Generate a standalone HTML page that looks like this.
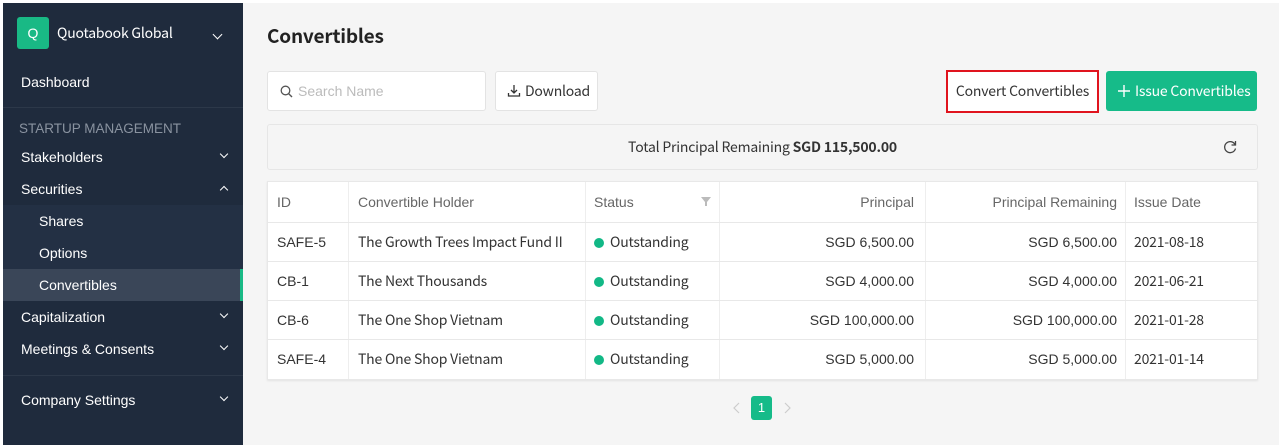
<!DOCTYPE html>
<html><head><meta charset="utf-8"><style>
*{box-sizing:border-box;margin:0;padding:0}
body{width:1282px;height:448px;background:#fff;font-family:"Liberation Sans",sans-serif;position:relative;overflow:hidden}
.sb{position:absolute;left:3px;top:3px;width:240px;height:442px;background:#1f2b3d;color:#fff}
.main{position:absolute;left:243px;top:3px;width:1036px;height:442px;background:#f5f5f5}
.a{position:absolute}
.n{font-family:"Noto Sans CJK KR","Liberation Sans",sans-serif;letter-spacing:-0.2px}
.ni{position:absolute;left:18px;font-size:14px;color:#fff}
.chev{position:absolute;right:16px;width:6px;height:6px;border-right:1.5px solid #fff;border-bottom:1.5px solid #fff;transform:rotate(45deg)}
.btn{position:absolute;background:#fff;border:1px solid #e3e3e3;border-radius:3px;font-size:14px;color:#333}
.tbl{position:absolute;left:24px;top:178px;width:991px;background:#fff;border:1px solid #e8e8e8;box-shadow:0 1px 2px rgba(0,0,0,.08)}
.row{position:relative;height:39px;border-bottom:1px solid #e8e8e8;font-size:14px;color:#333}
.row:last-child{border-bottom:none}
.c{position:absolute;top:0;height:100%;line-height:38px;border-right:1px solid #eee;white-space:nowrap}
.hd{height:41px;color:#666}
.hd .c{line-height:41px}
.dot{display:inline-block;width:10px;height:10px;border-radius:50%;background:#12b886;margin-right:6px;vertical-align:-1px}
</style></head><body>
<div class="sb">
 <div class="a" style="left:14px;top:14px;width:32px;height:32px;background:#19b985;border-radius:3px;color:#fff;text-align:center;line-height:32px;font-size:14px">Q</div>
 <div class="a n" style="left:54px;top:20px;font-size:14px">Quotabook Global</div>
 <div class="chev" style="top:28px;right:22px;width:7px;height:7px;border-width:1px"></div>
 <div class="ni" style="top:71px">Dashboard</div>
 <div class="a" style="left:0;top:104px;width:240px;height:1px;background:#2c3849"></div>
 <div class="ni" style="top:118px;color:#8a93a0;font-size:13.5px;left:16px">STARTUP MANAGEMENT</div>
 <div class="ni" style="top:146px">Stakeholders</div><div class="chev" style="top:148px"></div>
 <div class="ni" style="top:178px">Securities</div><div class="chev" style="top:184px;transform:rotate(225deg)"></div>
 <div class="a" style="left:0;top:202px;width:240px;height:64px;background:#233044"></div>
 <div class="ni" style="top:210px;left:36px">Shares</div>
 <div class="ni" style="top:242px;left:36px">Options</div>
 <div class="a" style="left:0;top:266px;width:240px;height:32px;background:#3a4658"></div>
 <div class="a" style="left:237px;top:266px;width:3px;height:32px;background:#19b985"></div>
 <div class="ni" style="top:274px;left:36px">Convertibles</div>
 <div class="ni" style="top:306px">Capitalization</div><div class="chev" style="top:308px"></div>
 <div class="ni" style="top:338px">Meetings &amp; Consents</div><div class="chev" style="top:340px"></div>
 <div class="a" style="left:0;top:372px;width:240px;height:1px;background:#2c3849"></div>
 <div class="ni" style="top:389px">Company Settings</div><div class="chev" style="top:391px"></div>
</div>
<div class="main">
 <div class="a n" style="left:24px;top:19px;font-size:19px;font-weight:bold;color:#222">Convertibles</div>
 <div class="btn" style="left:24px;top:68px;width:219px;height:40px;color:#bbb;line-height:38px;padding-left:30px">Search Name
  <svg class="a" style="left:12px;top:13px" width="13" height="13" viewBox="0 0 13 13"><circle cx="5.5" cy="5.5" r="4.3" fill="none" stroke="#555" stroke-width="1.3"/><path d="M8.6 8.6L12 12" stroke="#555" stroke-width="1.4"/></svg></div>
 <div class="btn n" style="left:252px;top:68px;width:103px;height:40px;line-height:38px;padding-left:29px">Download
  <svg class="a" style="left:11px;top:12px" width="14" height="14" viewBox="0 0 14 14"><path d="M7 1v8M4 6l3 3 3-3M1.5 9v3h11V9" fill="none" stroke="#333" stroke-width="1.3"/></svg></div>
 <div class="btn n" style="left:703px;top:67px;width:153px;height:43px;border:2px solid #e0141e;border-radius:0;line-height:39px;text-align:center">Convert Convertibles</div>
 <div class="a n" style="left:863px;top:68px;width:151px;height:40px;background:#16bb89;border-radius:3px;color:#fff;font-size:14px;line-height:40px;padding-left:29px">Issue Convertibles
  <svg class="a" style="left:12px;top:14px" width="12" height="12"><path d="M6 0v12M0 6h12" stroke="#fff" stroke-width="1.4"/></svg></div>
 <div class="a n" style="left:24px;top:121px;width:991px;height:46px;background:#f5f5f5;border:1px solid #e6e6e6;border-radius:3px;text-align:center;line-height:44px;font-size:14px;color:#333">Total Principal Remaining <b>SGD 115,500.00</b>
  <svg class="a" style="right:20px;top:15px" width="14" height="14" viewBox="0 0 14 14"><path d="M12 4.5A5.5 5.5 0 1 0 12.5 8.5" fill="none" stroke="#444" stroke-width="1.3"/><path d="M12.5 1v4h-4" fill="none" stroke="#444" stroke-width="1.3"/></svg></div>
 <div class="tbl">
  <div class="row hd">
   <div class="c" style="left:0;width:81px;padding-left:9px">ID</div>
   <div class="c" style="left:81px;width:237px;padding-left:9px">Convertible Holder</div>
   <div class="c" style="left:318px;width:134px;padding-left:8px">Status<svg class="a" style="right:8px;top:15px" width="10" height="9"><path d="M0 0h10L6 5v4H4V5z" fill="#bbb"/></svg></div>
   <div class="c" style="left:452px;width:206px;text-align:right;padding-right:11px">Principal</div>
   <div class="c" style="left:658px;width:200px;text-align:right;padding-right:8px">Principal Remaining</div>
   <div class="c" style="left:858px;width:133px;padding-left:8px;border:none">Issue Date</div>
  </div>
  <div class="row"><div class="c" style="left:0;width:81px;padding-left:9px">SAFE-5</div><div class="c n" style="left:81px;width:237px;padding-left:9px">The Growth Trees Impact Fund II</div><div class="c n" style="left:318px;width:134px;padding-left:8px"><span class="dot"></span>Outstanding</div><div class="c" style="left:452px;width:206px;text-align:right;padding-right:11px">SGD 6,500.00</div><div class="c" style="left:658px;width:200px;text-align:right;padding-right:8px">SGD 6,500.00</div><div class="c n" style="left:858px;width:133px;padding-left:8px;border:none">2021-08-18</div></div>
  <div class="row"><div class="c" style="left:0;width:81px;padding-left:9px">CB-1</div><div class="c n" style="left:81px;width:237px;padding-left:9px">The Next Thousands</div><div class="c n" style="left:318px;width:134px;padding-left:8px"><span class="dot"></span>Outstanding</div><div class="c" style="left:452px;width:206px;text-align:right;padding-right:11px">SGD 4,000.00</div><div class="c" style="left:658px;width:200px;text-align:right;padding-right:8px">SGD 4,000.00</div><div class="c n" style="left:858px;width:133px;padding-left:8px;border:none">2021-06-21</div></div>
  <div class="row"><div class="c" style="left:0;width:81px;padding-left:9px">CB-6</div><div class="c n" style="left:81px;width:237px;padding-left:9px">The One Shop Vietnam</div><div class="c n" style="left:318px;width:134px;padding-left:8px"><span class="dot"></span>Outstanding</div><div class="c" style="left:452px;width:206px;text-align:right;padding-right:11px">SGD 100,000.00</div><div class="c" style="left:658px;width:200px;text-align:right;padding-right:8px">SGD 100,000.00</div><div class="c n" style="left:858px;width:133px;padding-left:8px;border:none">2021-01-28</div></div>
  <div class="row"><div class="c" style="left:0;width:81px;padding-left:9px">SAFE-4</div><div class="c n" style="left:81px;width:237px;padding-left:9px">The One Shop Vietnam</div><div class="c n" style="left:318px;width:134px;padding-left:8px"><span class="dot"></span>Outstanding</div><div class="c" style="left:452px;width:206px;text-align:right;padding-right:11px">SGD 5,000.00</div><div class="c" style="left:658px;width:200px;text-align:right;padding-right:8px">SGD 5,000.00</div><div class="c n" style="left:858px;width:133px;padding-left:8px;border:none">2021-01-14</div></div>
 </div>
 <svg class="a" style="left:490px;top:399px" width="8" height="12"><path d="M6 1L1 6l5 5" fill="none" stroke="#ccc" stroke-width="1.2"/></svg>
 <div class="a" style="left:508px;top:393px;width:21px;height:24px;background:#16bb89;border-radius:3px;color:#fff;font-size:13px;text-align:center;line-height:24px">1</div>
 <svg class="a" style="left:540px;top:399px" width="8" height="12"><path d="M2 1l5 5-5 5" fill="none" stroke="#ccc" stroke-width="1.2"/></svg>
</div>
</body></html>
